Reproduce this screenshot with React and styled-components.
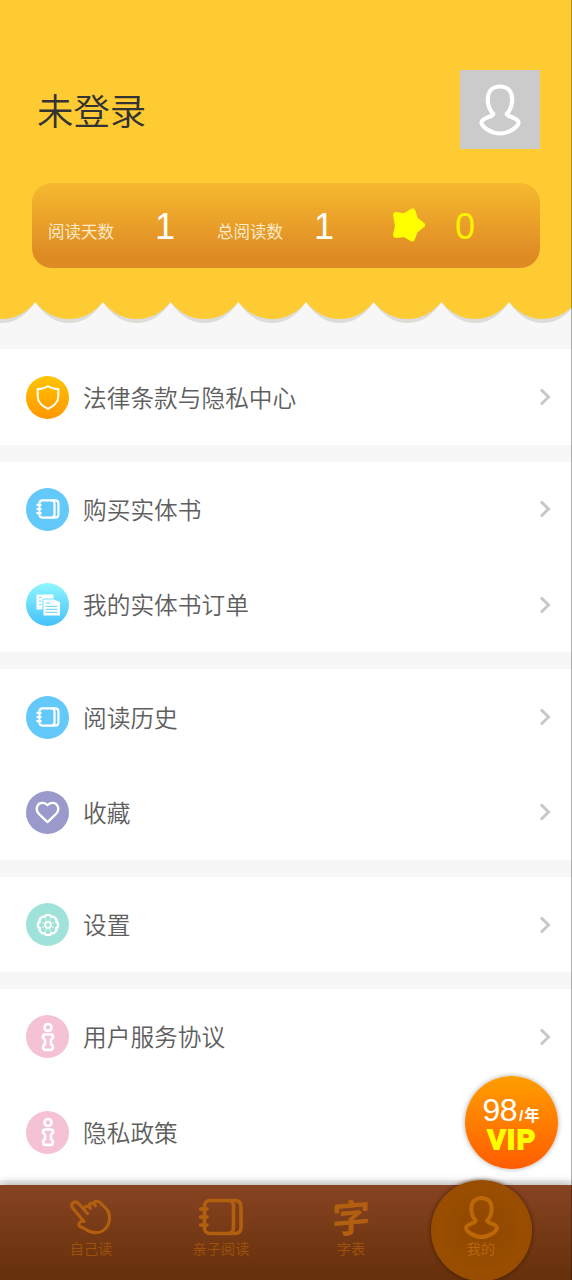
import React from "react";
import { styled, createGlobalStyle } from "styled-components";

const GlobalStyle = createGlobalStyle`
  * {
    box-sizing: border-box;
  }
  body {
    margin: 0;
    background: #f7f7f7;
    font-family: "Noto Sans CJK SC", sans-serif;
  }
`;

const Screen = styled.div`
  position: relative;
  display: flex;
  flex-direction: column;
  height: 1280px;
  overflow: hidden;
  background: #f7f7f7;
  &:after {
    content: "";
    position: absolute;
    top: 0;
    right: 0;
    width: 1px;
    height: 100%;
    background: rgba(0, 0, 0, 0.3);
  }
`;

const Header = styled.header`
  flex: none;
  height: 302px;
  padding: 70px 32px 0;
  background: #ffcb32;
`;

const Profile = styled.div`
  display: flex;
  align-items: center;
  justify-content: space-between;
  height: 79px;
  padding-left: 5px;
`;

const UserName = styled.h1`
  margin: 0;
  padding-bottom: 2px;
  font-size: 36.4px;
  line-height: 50px;
  font-weight: 350;
  color: #333;
`;

const Avatar = styled.div`
  display: flex;
  align-items: center;
  justify-content: center;
  width: 80px;
  height: 79px;
  background: #cbcbcb;
  color: #fff;
`;

const Stats = styled.div`
  display: flex;
  align-items: center;
  height: 84.5px;
  margin-top: 34px;
  padding-left: 16px;
  border-radius: 20px;
  background: linear-gradient(#f6b92f, #df8b24 85%);
`;

const Stat = styled.div`
  display: flex;
  align-items: center;
  width: ${(props) => props.$width}px;
`;

const StatLabel = styled.span`
  width: ${(props) => props.$width}px;
  padding-top: 11px;
  font-size: 16.5px;
  line-height: 24px;
  color: #fdebcb;
`;

const StatValue = styled.span`
  padding-top: 3px;
  font-family: "Liberation Sans", Arial, sans-serif;
  font-size: 36px;
  line-height: 40px;
  color: ${(props) => (props.$bright ? "#fbf200" : "#fff")};
`;

const Scallop = styled.svg`
  display: block;
  flex: none;
  width: 572px;
  height: 47.4px;
`;

const Group = styled.section`
  flex: none;
  margin-bottom: 16.9px;
  background: #fff;
`;

const Row = styled.div`
  display: flex;
  align-items: center;
  height: 95.4px;
  padding: 0 21px 0 26px;
`;

const RowLabel = styled.span`
  flex: 1;
  margin-left: 14px;
  padding-bottom: 1px;
  font-size: 23.7px;
  line-height: 34px;
  font-weight: 350;
  color: #5e5e5e;
`;

const Badge = styled.div`
  display: flex;
  align-items: center;
  justify-content: center;
  width: 43px;
  height: 43px;
  border-radius: 50%;
  background: ${(props) => props.$fill};
  color: #fff;
`;

const Icon = styled.svg`
  display: block;
  fill: none;
  stroke: currentColor;
  stroke-linecap: round;
  stroke-linejoin: round;
`;

const TabBar = styled.nav`
  position: absolute;
  left: 0;
  right: 0;
  bottom: 0;
  display: flex;
  height: 95px;
  padding: 0 26px;
  background: linear-gradient(#874322, #65300a);
  box-shadow: 0 -1px 9px rgba(0, 0, 0, 0.33);
`;

const Tab = styled.div`
  position: relative;
  display: flex;
  flex: 1;
  flex-direction: column;
  align-items: center;
  padding-top: 11px;
  color: ${(props) => (props.$active ? "#bd6806" : "#b2600f")};
`;

const TabIcon = styled.div`
  position: relative;
  display: flex;
  align-items: center;
  justify-content: center;
  height: 42px;
`;

const TabLabel = styled.span`
  position: relative;
  font-size: 14.2px;
  line-height: 20px;
  color: ${(props) => (props.$active ? "#b5660e" : "#9c510c")};
`;

const ActiveDisc = styled.div`
  position: absolute;
  top: -5px;
  left: 50%;
  width: 101px;
  height: 101px;
  margin-left: -50px;
  border-radius: 50%;
  background: radial-gradient(circle, #8e4600 0%, #994e00 60%, #934900 100%);
  box-shadow: 0 0 4px rgba(50, 20, 0, 0.8);
`;

const Character = styled.span`
  font-size: 38px;
  line-height: 42px;
  font-weight: 700;
  transform: translateY(-1px) skewY(-5deg);
`;

const VipButton = styled.div`
  position: absolute;
  left: 465px;
  top: 1075.5px;
  width: 93px;
  height: 93px;
  padding-top: 16px;
  border-radius: 50%;
  text-align: center;
  background: linear-gradient(#ff9e00, #ff5c00);
  box-shadow: 0 0 5px rgba(0, 0, 0, 0.35);
`;

const Price = styled.div`
  display: flex;
  align-items: baseline;
  justify-content: center;
  height: 34px;
  font-family: "Liberation Sans", "Noto Sans CJK SC", sans-serif;
  font-size: 32px;
  line-height: 36px;
  letter-spacing: -0.5px;
  color: #fff;
`;

const PriceUnit = styled.span`
  margin-left: 2px;
  font-size: 15.5px;
  font-weight: 700;
  letter-spacing: 0.8px;
`;

const VipText = styled.div`
  padding-left: 1px;
  font-family: "Liberation Sans", Arial, sans-serif;
  font-size: 27px;
  line-height: 29px;
  font-weight: 700;
  letter-spacing: 1.8px;
  color: #ff0;
  -webkit-text-stroke: 1.8px #ff0;
`;

function PersonIcon({ size, strokeWidth = 4 }) {
  return (
    <Icon width={size} height={size} viewBox="0 0 54 54" strokeWidth={strokeWidth}>
      <path d="M27 3.500C18.500 3.500 14.800 9.500 14.800 16.500C14.800 22 17 27.500 20.300 31C20.300 34 8.500 34.500 8.500 39.500C8.500 43.500 18 50.500 27 50.500C36 50.500 45.500 43.500 45.500 39.500C45.500 34.500 33.700 34 33.700 31C37 27.500 39.200 22 39.200 16.500C39.200 9.500 35.500 3.500 27 3.500Z" />
    </Icon>
  );
}

function BookIcon({ width, height, strokeWidth = 4 }) {
  return (
    <Icon width={width} height={height} viewBox="0 0 46 38" strokeWidth={strokeWidth}>
      <rect x="6.500" y="2.500" width="29" height="33" rx="5.500" />
      <path d="M31 2.500H37Q43 2.500 43 9V29Q43 35.500 37 35.500H31M2.500 11H9M2.500 19H9M2.500 27H9" />
    </Icon>
  );
}

function ShieldIcon() {
  return (
    <Icon width="24" height="26" viewBox="0 0 24 26" strokeWidth="2">
      <path d="M12 2C9 4.300 5.500 4.900 1.700 5V12.500C1.700 18 6.500 22.500 12 24.700C17.500 22.500 22.300 18 22.300 12.500V5C18.500 4.900 15 4.300 12 2Z" />
    </Icon>
  );
}

function OrderIcon() {
  return (
    <svg width="26" height="22" viewBox="-1.500 0 26 22">
      <path d="M0 0.500H17V4.500H6V15.500H0Z" fill="#fff" />
      <path d="M2.500 3.500H5M2.500 7H5M2.500 10.500H5" stroke="#6cdcfc" strokeWidth="1" />
      <path d="M7 5.500H17.500L23.500 8V21.500H7Z" fill="#fff" />
      <path d="M9 9H13.500M9 12.300H21M9 15.300H21M9 18.300H21" stroke="#61d3fb" strokeWidth="1" />
    </svg>
  );
}

function HeartIcon() {
  return (
    <Icon width="25" height="23" viewBox="0 0 26 24" strokeWidth="2.5">
      <path d="M13 22L4 13.500C-0.500 8.500 2.500 2 7.800 2C10.300 2 12 3 13 4.300C14 3 15.700 2 18.200 2C23.500 2 26.500 8.500 22 13.500Z" />
    </Icon>
  );
}

function GearIcon() {
  const lobes = [0, 45, 90, 135, 180, 225, 270, 315];
  return (
    <Icon width="24" height="24" viewBox="0 0 24 24" strokeWidth="2.300">
      {lobes.map((angle) => (
        <path key={angle} d="M8.600 4C9.400 1.200 14.600 1.200 15.400 4" transform={`rotate(${angle} 12 12)`} />
      ))}
      <circle cx="12" cy="12" r="2.900" strokeWidth="2" />
      {lobes.map((angle) => (
        <path key={angle} d="M12 6.500V6.600" strokeWidth="1.400" transform={`rotate(${angle + 22.5} 12 12)`} />
      ))}
    </Icon>
  );
}

function InfoIcon() {
  return (
    <Icon width="16" height="30" viewBox="0 0 16 30" strokeWidth="2.700">
      <circle cx="8" cy="5.500" r="3.500" />
      <path d="M5 12.500H11Q13 12.500 13 15Q13 17 11 17.800V22Q12.800 23 12.800 25Q12.800 27.800 11 27.800H5Q3.200 27.800 3.200 25Q3.200 23 5 22V17.800Q3 17 3 15Q3 12.500 5 12.500Z" />
    </Icon>
  );
}

function HandIcon() {
  return (
    <Icon width="44" height="38" viewBox="0 0 44 38" strokeWidth="3.100">
      <path d="M18.500 15.500L9.500 5.500C6 1.700 0.500 5.500 3.700 10L15 23.500C11 22.500 8.800 26 10.500 28C12 30 15 29.500 17 31.500C22 35.500 31 36 36 31C42 25 41.500 15.500 37.500 11L31 4.500C28.500 2.500 25.500 3 25 5.500L26.500 8M25 6C22.500 4.500 20 5.500 20.500 8L21.300 10.500M20 8.500C17.500 7.500 15.500 8.500 15 11" />
    </Icon>
  );
}

function StarIcon() {
  return (
    <svg width="34" height="34" viewBox="0 0 33 34">
      <path
        d="M20 3.500L22.500 11.500L29.500 17L22.500 22.500L19.500 30.500L12 26L3.500 27L5.500 17.500L3.500 7L11.500 8.500Z"
        fill="#ff0"
        stroke="#ff0"
        strokeWidth="6"
        strokeLinejoin="round"
      />
    </svg>
  );
}

function Chevron() {
  return (
    <Icon width="12" height="18" viewBox="0 0 12 18" strokeWidth="3" color="#c8c8cb">
      <path d="M3 2.500L9.500 9L3 15.500" strokeLinecap="square" strokeLinejoin="miter" />
    </Icon>
  );
}

const book = <BookIcon width={24} height={20} strokeWidth={4.2} />;

const groups = [
  [{ label: "法律条款与隐私中心", fill: "linear-gradient(#ffc400, #ff9700)", icon: <ShieldIcon /> }],
  [
    { label: "购买实体书", fill: "#63c8fa", icon: book },
    { label: "我的实体书订单", fill: "linear-gradient(#8ff6ff, #45c0fa)", icon: <OrderIcon /> },
  ],
  [
    { label: "阅读历史", fill: "#63c8fa", icon: book },
    { label: "收藏", fill: "#9999cc", icon: <HeartIcon /> },
  ],
  [{ label: "设置", fill: "#9fe2d9", icon: <GearIcon /> }],
  [
    { label: "用户服务协议", fill: "#f5c1d5", icon: <InfoIcon /> },
    { label: "隐私政策", fill: "#f5c1d5", icon: <InfoIcon />, plain: true },
  ],
];

const tabs = [
  { label: "自己读", icon: <HandIcon /> },
  { label: "亲子阅读", icon: <BookIcon width={46} height={38} strokeWidth={3.6} /> },
  { label: "字表", icon: <Character>字</Character> },
  { label: "我的", icon: <PersonIcon size={45} strokeWidth={4.8} />, active: true },
];

// repeating 67.7px scallops, the grey copy is stretched down to form the edge
const scallops = Array.from({ length: 10 }, (_, i) => {
  const x = -32.5 + i * 67.7;
  return `M${x} 0Q${x + 14} 17 ${x + 33.85} 17Q${x + 53.7} 17 ${x + 67.7} 0Z`;
}).join("");

export default function App() {
  return (
    <>
      <GlobalStyle />
      <Screen>
        <Header>
          <Profile>
            <UserName>未登录</UserName>
            <Avatar>
              <PersonIcon size={54} strokeWidth={4.2} />
            </Avatar>
          </Profile>
          <Stats>
            <Stat $width={169}>
              <StatLabel $width={107}>阅读天数</StatLabel>
              <StatValue>1</StatValue>
            </Stat>
            <Stat $width={175}>
              <StatLabel $width={97}>总阅读数</StatLabel>
              <StatValue>1</StatValue>
            </Stat>
            <Stat $width={63}>
              <StarIcon />
            </Stat>
            <StatValue $bright>0</StatValue>
          </Stats>
        </Header>
        <Scallop viewBox="0 0 572 47.4">
          <path d={scallops} transform="scale(1 1.240)" fill="#dedcd8" />
          <path d={scallops} fill="#ffcb32" />
        </Scallop>
        {groups.map((rows) => (
          <Group key={rows[0].label}>
            {rows.map((row) => (
              <Row key={row.label}>
                <Badge $fill={row.fill}>{row.icon}</Badge>
                <RowLabel>{row.label}</RowLabel>
                {!row.plain && <Chevron />}
              </Row>
            ))}
          </Group>
        ))}
        <TabBar>
          {tabs.map((tab) => (
            <Tab key={tab.label} $active={tab.active}>
              {tab.active && <ActiveDisc />}
              <TabIcon>{tab.icon}</TabIcon>
              <TabLabel $active={tab.active}>{tab.label}</TabLabel>
            </Tab>
          ))}
        </TabBar>
        <VipButton>
          <Price>
            98<PriceUnit>/年</PriceUnit>
          </Price>
          <VipText>VIP</VipText>
        </VipButton>
      </Screen>
    </>
  );
}
